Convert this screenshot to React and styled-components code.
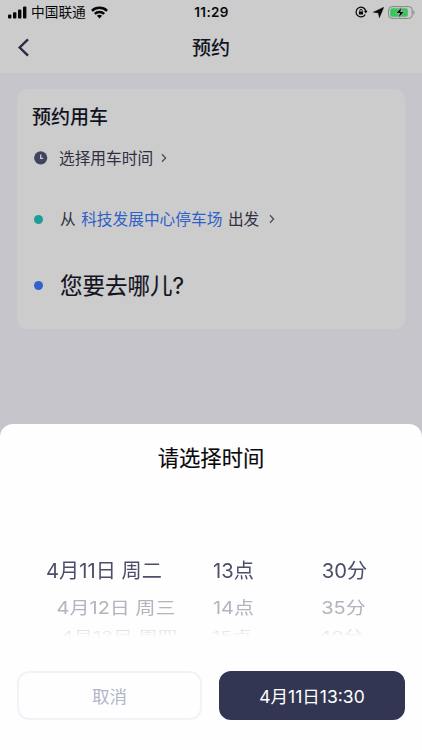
import React from 'react'
import styled, { createGlobalStyle } from 'styled-components'

const GlobalStyle = createGlobalStyle`
  * {
    box-sizing: border-box;
  }

  body {
    margin: 0;
    font-family: Inter, "Noto Sans CJK SC", sans-serif;
    -webkit-font-smoothing: antialiased;
  }

  button {
    font-family: inherit;
  }
`

const Screen = styled.div`
  position: relative;
  width: 422px;
  height: 750px;
  overflow: hidden;
  background: #c6c5cb;
`

const Header = styled.header`
  height: 73px;
  background: #cccccc;
`

const StatusBar = styled.div`
  display: grid;
  grid-template-columns: 1fr auto 1fr;
  align-items: center;
  height: 24px;
  padding: 0 7px 0 8px;
  color: #08080a;
`

const StatusGroup = styled.div`
  display: flex;
  align-items: center;
  justify-content: ${({ $end }) => ($end ? 'flex-end' : 'flex-start')};
`

const Carrier = styled.span`
  margin: 0 5px 0 4px;
  font-size: 13.7px;
  line-height: 24px;
`

const Clock = styled.span`
  font-size: 13.5px;
  font-weight: 600;
  letter-spacing: 0.3px;
`

const NavBar = styled.div`
  display: grid;
  grid-template-columns: 40px 1fr 40px;
  align-items: center;
  height: 47px;
`

const BackButton = styled.button`
  display: flex;
  padding: 0 0 0 17px;
  border: 0;
  background: none;
`

const NavTitle = styled.h1`
  margin: 2px 0 0;
  color: #12131f;
  font-size: 19px;
  font-weight: 500;
  line-height: 28px;
  text-align: center;
`

const Card = styled.section`
  display: flex;
  flex-direction: column;
  width: 388px;
  height: 240px;
  margin: 16px 0 0 17px;
  padding: 15px 15px 0;
  border-radius: 10px;
  background: #cccccc;
`

const CardTitle = styled.h2`
  margin: 0;
  color: #12131f;
  font-size: 19px;
  font-weight: 500;
  line-height: 28px;
`

const TripRow = styled.div`
  display: grid;
  grid-template-columns: 27px auto 1fr;
  align-items: center;
  height: 24px;
  margin-top: ${({ $gap }) => $gap}px;
  color: #2f3142;
  font-size: 15.7px;
  line-height: 22px;
`

const Marker = styled.span`
  display: flex;
  padding-left: 2px;
`

const Dot = styled.i`
  width: 9px;
  height: 9px;
  border-radius: 50%;
  background: ${({ color }) => color};
`

const TripText = styled.span`
  display: flex;
  gap: 5.5px;
  margin: 2px 0 0 ${({ $shift = 0 }) => $shift}px;
  white-space: nowrap;
`

const Place = styled.span`
  color: #2f5fc8;
`

const Question = styled.span`
  margin: 2px 0 0 1px;
  color: #12131f;
  font-size: 22.5px;
  line-height: 22px;
  white-space: nowrap;
  -webkit-text-stroke: 0.15px;
`

const ArrowSlot = styled.span`
  display: flex;
  padding-left: ${({ $left }) => $left}px;
`

const Sheet = styled.section`
  position: absolute;
  left: 0;
  right: 0;
  bottom: 0;
  display: flex;
  flex-direction: column;
  height: 326px;
  border-radius: 13px 13px 0 0;
  background: #fefefe;
`

const SheetTitle = styled.h2`
  margin: 18px 0 0;
  color: #09090b;
  font-size: 21.3px;
  font-weight: 400;
  line-height: 32px;
  text-align: center;
  -webkit-text-stroke: 0.15px;
`

const Wheel = styled.div`
  flex-shrink: 0;
  height: 97px;
  margin-top: 74px;
  padding-top: 4px;
  mask-image: linear-gradient(#000 74px, rgba(0, 0, 0, 0.6) 81px, transparent 89px);
`

const WheelRow = styled.div`
  display: grid;
  grid-template-columns: 208px 50px 1fr;
  height: ${({ $height }) => $height}px;
  color: ${({ $color }) => $color};
  font-size: 20.2px;
  line-height: ${({ $height }) => $height}px;
  text-align: center;
  white-space: pre;
`

const WheelItem = styled.span`
  transform: translateX(${({ $x }) => $x}px) scale(${({ $sx }) => $sx}, ${({ $sy }) => $sy});
`

const Actions = styled.div`
  display: grid;
  grid-template-columns: 185px 186px;
  gap: 17px;
  padding: 26px 17px 0;
`

const Button = styled.button`
  height: 49px;
  padding: 0;
  border: 2px solid ${({ $primary }) => ($primary ? '#323652' : '#f2f3f9')};
  border-radius: 12px;
  background: ${({ $primary }) => ($primary ? '#323652' : '#fefefe')};
  color: ${({ $primary }) => ($primary ? '#ffffff' : '#b0b6c7')};
  font-size: 17.5px;
`

const rows = [
  { height: 38, color: '#4c4e69', sx: 1, sy: 1, cells: [['4月11日 周二', 0], ['13点', 0.5], ['30分', 4.5]] },
  { height: 35, color: '#b3b4be', sx: 0.99, sy: 0.86, cells: [['4月12日 周三', 12], ['14点', 0.5], ['35分', 3.5]] },
  { height: 22, color: '#c8c8d0', sx: 0.97, sy: 0.6, cells: [['4月13日 周四', 15], ['15点', -1], ['40分', 1]] },
]

function Signal() {
  return (
    <svg width="19" height="13" viewBox="0 0 19 13" fill="#08080a">
      <rect x="0" y="8.5" width="3.4" height="4" rx="1" />
      <rect x="5" y="6.2" width="3.4" height="6.3" rx="1" />
      <rect x="10" y="3.5" width="3.4" height="9" rx="1" />
      <rect x="15" y="0.5" width="3.4" height="12" rx="1" />
    </svg>
  )
}

function Wifi() {
  return (
    <svg width="17" height="13" viewBox="0 0 17 13" fill="none" stroke="#08080a" strokeWidth="2.4">
      <path d="M.9 4.8C5.1.8 11.9.8 16.1 4.8" />
      <path d="M3.8 7.9C6.4 5.4 10.6 5.4 13.2 7.9" />
      <path d="M8.5 12.4 5.9 9.7C7.3 8.4 9.7 8.4 11.1 9.7Z" fill="#08080a" stroke="none" />
    </svg>
  )
}

function RotationLock() {
  return (
    <svg width="13" height="12" viewBox="0 0 13 12" fill="none" stroke="#08080a">
      <path d="M10.2 8.6A4.9 4.9 0 1 1 10.8 5" strokeWidth="1.2" />
      <path d="M8.9 4.8h3.7L10.8 7.4Z" fill="#08080a" stroke="none" />
      <rect x="3.9" y="5.4" width="4.2" height="3.2" rx=".5" fill="#08080a" stroke="none" />
      <path d="M4.8 5.6V4.5a1.2 1.2 0 0 1 2.4 0v1.1" strokeWidth=".9" />
    </svg>
  )
}

const LocationIcon = styled.svg`
  margin: 0 4px 0 5px;
`

function Location() {
  return (
    <LocationIcon width="11" height="11" viewBox="0 0 11 11">
      <path d="M10.8.2 6.4 10.8 5.3 6 .2 5.2Z" fill="#08080a" stroke="#08080a" strokeWidth=".4" />
    </LocationIcon>
  )
}

function Battery() {
  return (
    <svg width="27" height="13" viewBox="0 0 27 13">
      <rect x=".6" y=".6" width="23.6" height="11.8" rx="3.4" fill="none" stroke="#858587" />
      <path d="M25.3 4.5c1.6.5 1.6 3.5 0 4Z" fill="#858587" />
      <rect x="2.2" y="2.2" width="17.6" height="8.6" rx="1.8" fill="#35c759" />
      <path d="M14.2.5 7.6 7.3h4l-1.7 5.2 6.8-6.9h-4Z" fill="#08080a" stroke="#cccccc" strokeWidth=".7" />
    </svg>
  )
}

function Arrow() {
  return (
    <svg width="6" height="10" viewBox="0 0 6 10" fill="none" stroke="#4b4c58" strokeWidth="1.3">
      <path d="M1 1.3l3.6 3.7L1 8.7" />
    </svg>
  )
}

export default function App() {
  return (
    <>
      <GlobalStyle />
      <Screen>
        <Header>
          <StatusBar>
            <StatusGroup>
              <Signal />
              <Carrier>中国联通</Carrier>
              <Wifi />
            </StatusGroup>
            <Clock>11:29</Clock>
            <StatusGroup $end>
              <RotationLock />
              <Location />
              <Battery />
            </StatusGroup>
          </StatusBar>
          <NavBar>
            <BackButton aria-label="返回">
              <svg width="13" height="19" viewBox="0 0 13 19" fill="none" stroke="#292b44" strokeWidth="2.4">
                <path d="M11 1.3 2.7 9.5 11 17.7" />
              </svg>
            </BackButton>
            <NavTitle>预约</NavTitle>
          </NavBar>
        </Header>

        <Card>
          <CardTitle>预约用车</CardTitle>
          <TripRow $gap={14}>
            <Marker>
              <svg width="14" height="14" viewBox="0 0 14 14">
                <circle cx="6.7" cy="6.8" r="6.6" fill="#41445f" />
                <path d="M6.7 3.5v3.8h2.5" fill="none" stroke="#c7c8d0" strokeWidth="1.3" />
              </svg>
            </Marker>
            <TripText>选择用车时间</TripText>
            <ArrowSlot $left={8}><Arrow /></ArrowSlot>
          </TripRow>
          <TripRow $gap={37}>
            <Marker><Dot color="#1c9e98" /></Marker>
            <TripText $shift={1}>
              <span>从</span>
              <Place>科技发展中心停车场</Place>
              <span>出发</span>
            </TripText>
            <ArrowSlot $left={10}><Arrow /></ArrowSlot>
          </TripRow>
          <TripRow $gap={42}>
            <Marker><Dot color="#3163cc" /></Marker>
            <Question>您要去哪儿?</Question>
          </TripRow>
        </Card>

        <Sheet>
          <SheetTitle>请选择时间</SheetTitle>
          <Wheel>
            {rows.map(row => (
              <WheelRow key={row.color} $height={row.height} $color={row.color}>
                {row.cells.map(([label, x]) => (
                  <WheelItem key={label} $x={x} $sx={row.sx} $sy={row.sy}>{label}</WheelItem>
                ))}
              </WheelRow>
            ))}
          </Wheel>
          <Actions>
            <Button>取消</Button>
            <Button $primary>4月11日13:30</Button>
          </Actions>
        </Sheet>
      </Screen>
    </>
  )
}
